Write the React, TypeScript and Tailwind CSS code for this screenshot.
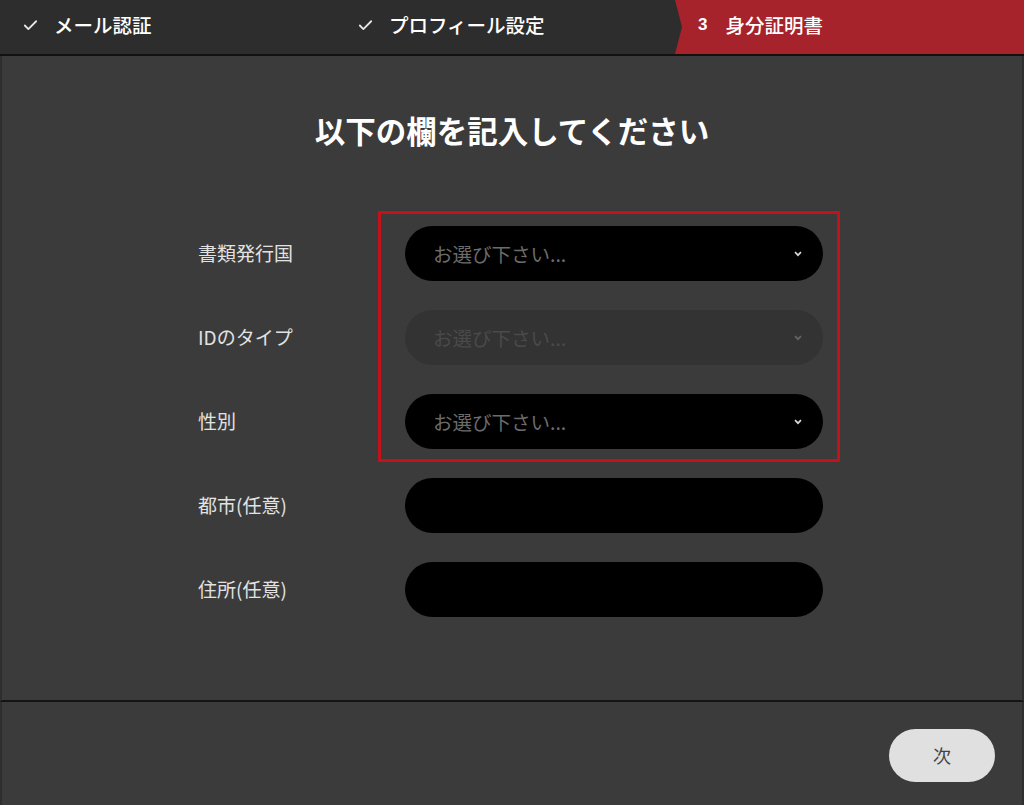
import React from 'react';
import { Check } from 'lucide-react';

const font = "font-['Noto_Sans_CJK_JP','Noto_Sans',sans-serif]";

const Chevron = ({ dim }: { dim?: boolean }) => (
    <svg width="8" height="6" viewBox="0 0 8 6" className={dim ? 'opacity-30' : ''}>
        <path d="M1 1.2 L4 4.2 L7 1.2" fill="none" stroke="#d8d8d8" strokeWidth="1.7" />
    </svg>
);

const SelectBox = ({ disabled }: { disabled?: boolean }) => (
    <div
        className={`w-[418px] h-[55px] rounded-full flex items-center justify-between pl-[28px] pr-[21px] ${
            disabled ? 'bg-[#333333]' : 'bg-black'
        }`}
    >
        <span className={`text-[19.5px] ${disabled ? 'text-[#4a4a4a]' : 'text-[#6c6c6c]'}`}>お選び下さい...</span>
        <Chevron dim={disabled} />
    </div>
);

const rows = [
    { label: '書類発行国', kind: 'select' },
    { label: 'IDのタイプ', kind: 'disabled' },
    { label: '性別', kind: 'select' },
    { label: '都市(任意)', kind: 'input' },
    { label: '住所(任意)', kind: 'input' },
];

const App = () => {
    return (
        <div className={`w-[1024px] h-[805px] flex flex-col bg-[#3b3b3b] ${font}`}>
            {/* Steps */}
            <div className="h-[56px] flex bg-[#2d2d2d] border-b-2 border-[#111111] text-white text-[19.5px] font-medium">
                <div className="w-[335px] flex items-center gap-[15px] pl-[22px] pb-[4px]">
                    <Check size={17} strokeWidth={2.5} color="#e8e8e8" />
                    <span>メール認証</span>
                </div>
                <div className="w-[340px] flex items-center gap-[15px] pl-[22px] pb-[4px]">
                    <Check size={17} strokeWidth={2.5} color="#e8e8e8" />
                    <span>プロフィール設定</span>
                </div>
                <div className="flex-1 flex items-center pl-[23px] gap-[18px] pb-[4px] bg-[#a6232b] [clip-path:polygon(0_0,100%_0,100%_100%,0_100%,7px_50%)]">
                    <span className="font-['Liberation_Sans',sans-serif] font-bold text-[17px]">3</span>
                    <span>身分証明書</span>
                </div>
            </div>

            {/* Form */}
            <div className="relative flex-1 flex flex-col border-l-2 border-r-2 border-[#2e2e2e] border-b-2 border-b-[#141414]">
                <h1 className="mt-[54px] text-center text-white text-[30.5px] font-bold leading-[40px]">
                    以下の欄を記入してください
                </h1>
                <div className="mt-[76px] flex flex-col gap-[29px] pl-[196px]">
                    {rows.map((r) => (
                        <div key={r.label} className="flex items-center">
                            <span className="w-[207px] text-[19px] text-[#e2e2e2]">{r.label}</span>
                            {r.kind === 'input' ? (
                                <div className="w-[418px] h-[55px] rounded-full bg-black" />
                            ) : (
                                <SelectBox disabled={r.kind === 'disabled'} />
                            )}
                        </div>
                    ))}
                </div>
                <div className="absolute left-[376px] top-[155px] w-[462px] h-[251px] border-[3px] border-[#c4121b]" />
            </div>

            {/* Footer */}
            <div className="h-[103px] flex justify-end items-start pt-[27px] pr-[27px] border-l-2 border-r-2 border-[#2e2e2e]">
                <button className="w-[106px] h-[53px] rounded-full bg-[#e0e0e0] text-[#444444] text-[18px]">次</button>
            </div>
        </div>
    );
};

export default App;
